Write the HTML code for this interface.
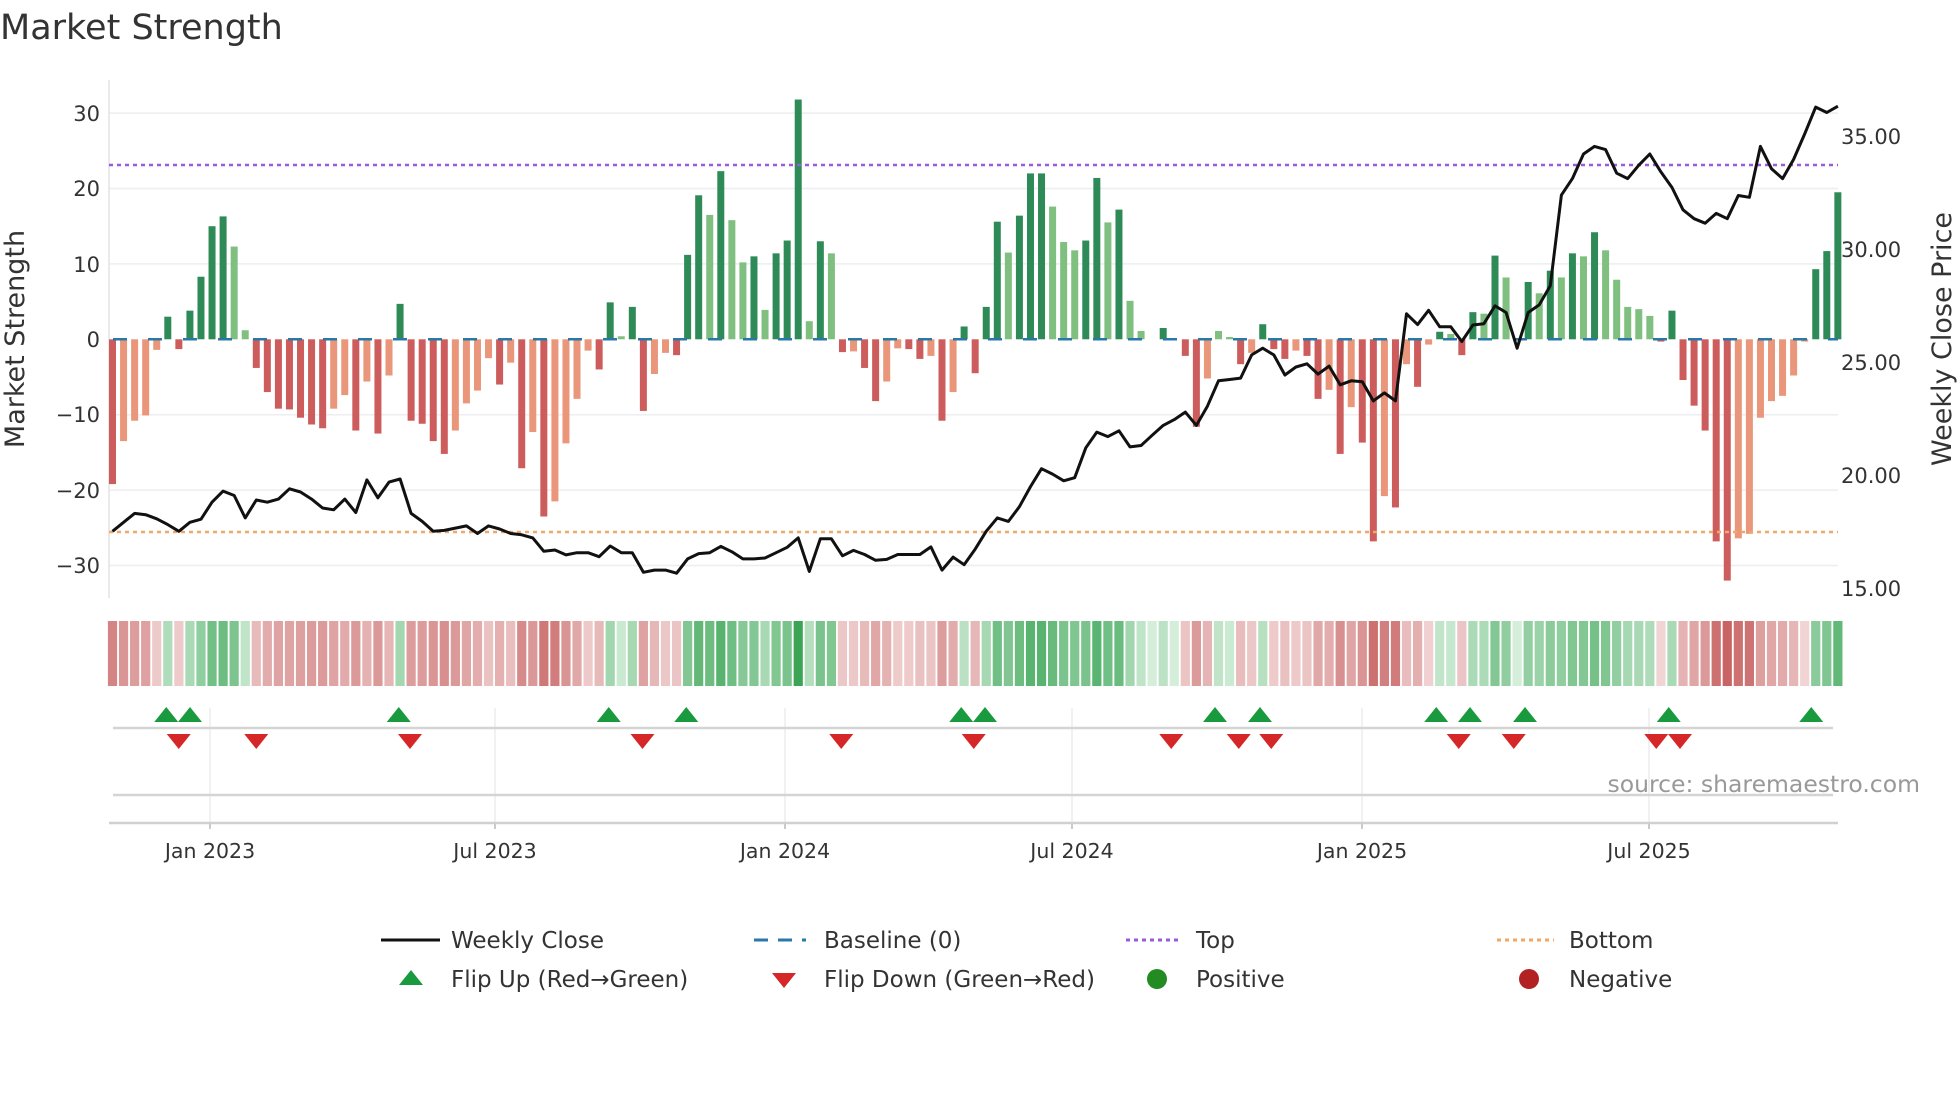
<!DOCTYPE html>
<html><head><meta charset="utf-8"><style>
html,body{margin:0;padding:0;background:#fff;}
body{width:1960px;height:1102px;overflow:hidden;font-family:"DejaVu Sans","Liberation Sans",sans-serif;}
svg text{font-family:"DejaVu Sans","Liberation Sans",sans-serif;}
</style></head><body>
<svg id="s" width="1960" height="1102" xmlns="http://www.w3.org/2000/svg">
<text x="0" y="39" font-size="35" fill="#333">Market Strength</text>
<g id="g"></g>
<text transform="translate(24,339) rotate(-90)" text-anchor="middle" font-size="27" fill="#333">Market Strength</text>
<text transform="translate(1951,339) rotate(-90)" text-anchor="middle" font-size="27" fill="#333">Weekly Close Price</text>
<g font-size="21" fill="#333" text-anchor="end">
<text x="100" y="121">30</text><text x="100" y="196">20</text><text x="100" y="272">10</text>
<text x="100" y="347">0</text><text x="100" y="422">−10</text><text x="100" y="498">−20</text><text x="100" y="573">−30</text>
</g>
<g font-size="21" fill="#333">
<text x="1841" y="144">35.00</text><text x="1841" y="257">30.00</text><text x="1841" y="370">25.00</text>
<text x="1841" y="483">20.00</text><text x="1841" y="596">15.00</text>
</g>
<g font-size="20.5" fill="#333" text-anchor="middle">
<text x="210" y="858">Jan 2023</text><text x="495" y="858">Jul 2023</text><text x="785" y="858">Jan 2024</text>
<text x="1072" y="858">Jul 2024</text><text x="1362" y="858">Jan 2025</text><text x="1649" y="858">Jul 2025</text>
</g>
<text x="1920" y="792" text-anchor="end" font-size="23.5" fill="#999">source: sharemaestro.com</text>
<g font-size="23" fill="#333">
<line x1="381" y1="940" x2="440" y2="940" stroke="#111" stroke-width="3"/>
<text x="451" y="948">Weekly Close</text>
<line x1="754" y1="940" x2="806" y2="940" stroke="#2a78a8" stroke-width="3" stroke-dasharray="14,10"/>
<text x="824" y="948">Baseline (0)</text>
<line x1="1126" y1="940" x2="1181" y2="940" stroke="#9b59e0" stroke-width="3" stroke-dasharray="4,4"/>
<text x="1196" y="948">Top</text>
<line x1="1497" y1="940" x2="1554" y2="940" stroke="#f0a868" stroke-width="3" stroke-dasharray="4,4"/>
<text x="1569" y="948">Bottom</text>
<polygon points="411,970 423,985 399,985" fill="#1a9a3e"/>
<text x="451" y="987">Flip Up (Red→Green)</text>
<polygon points="772,973 796,973 784,988" fill="#d62728"/>
<text x="824" y="987">Flip Down (Green→Red)</text>
<circle cx="1157" cy="979" r="10" fill="#228b22"/>
<text x="1196" y="987">Positive</text>
<circle cx="1529" cy="979" r="10" fill="#b22222"/>
<text x="1569" y="987">Negative</text>
</g>
</svg>
<script>
var V=[[-19.2,'r'],[-13.5,'s'],[-10.8,'s'],[-10.1,'s'],[-1.4,'s'],[3,'G'],[-1.3,'r'],[3.8,'G'],[8.3,'G'],[15,'G'],[16.3,'G'],[12.3,'g'],[1.2,'g'],[-3.8,'r'],[-7,'r'],[-9.2,'r'],[-9.3,'r'],[-10.4,'r'],[-11.3,'r'],[-11.8,'r'],[-9.2,'s'],[-7.4,'s'],[-12.1,'r'],[-5.6,'s'],[-12.5,'r'],[-4.8,'s'],[4.7,'G'],[-10.8,'r'],[-11.2,'r'],[-13.5,'r'],[-15.2,'r'],[-12.1,'s'],[-8.5,'s'],[-6.8,'s'],[-2.5,'s'],[-6,'r'],[-3.1,'s'],[-17.1,'r'],[-12.3,'s'],[-23.5,'r'],[-21.5,'s'],[-13.8,'s'],[-7.9,'s'],[-1.5,'s'],[-4,'r'],[4.9,'G'],[0.4,'g'],[4.3,'G'],[-9.5,'r'],[-4.6,'s'],[-1.8,'s'],[-2.1,'r'],[11.2,'G'],[19.1,'G'],[16.5,'g'],[22.3,'G'],[15.8,'g'],[10.2,'g'],[11,'G'],[3.9,'g'],[11.4,'G'],[13.1,'G'],[31.8,'G'],[2.4,'g'],[13,'G'],[11.4,'g'],[-1.7,'r'],[-1.6,'s'],[-3.8,'r'],[-8.2,'r'],[-5.6,'s'],[-1.2,'s'],[-1.3,'r'],[-2.6,'r'],[-2.2,'s'],[-10.8,'r'],[-7,'s'],[1.7,'G'],[-4.5,'r'],
[4.3,'G'],[15.6,'G'],[11.5,'g'],[16.4,'G'],[22,'G'],[22,'G'],[17.6,'g'],[12.9,'g'],[11.8,'g'],[13.1,'G'],[21.4,'G'],[15.5,'g'],[17.2,'G'],[5.1,'g'],[1.1,'g'],[0,'g'],[1.5,'G'],[0,'g'],[-2.2,'r'],[-11.6,'r'],[-5.2,'s'],[1.1,'g'],[0.3,'g'],[-3.3,'r'],[-1.8,'s'],[2,'G'],[-1.3,'r'],[-2.6,'r'],[-1.5,'s'],[-2.2,'r'],[-7.9,'r'],[-6.7,'s'],[-15.2,'r'],[-9,'s'],[-13.7,'r'],[-26.8,'r'],[-20.8,'s'],[-22.3,'r'],[-3.3,'s'],[-6.3,'r'],[-0.7,'s'],[1,'G'],[0.7,'g'],[-2.1,'r'],[3.6,'G'],[3.4,'g'],[11.1,'G'],[8.2,'g'],[0,'g'],[7.6,'G'],[6.1,'g'],[9.1,'G'],[8.2,'g'],[11.4,'G'],[11,'g'],[14.2,'G'],[11.8,'g'],[7.9,'g'],[4.3,'g'],[4,'g'],[3.1,'g'],[-0.3,'r'],[3.8,'G'],[-5.4,'r'],[-8.8,'r'],[-12.1,'r'],[-26.8,'r'],[-32,'r'],[-26.4,'s'],[-25.8,'s'],[-10.4,'s'],[-8.2,'s'],[-7.5,'s'],[-4.8,'s'],[-0.3,'s'],[9.3,'G'],[11.7,'G'],[19.5,'G']];
var C={G:'#2e8b57',g:'#7fbf7f',r:'#cd5c5c',s:'#e9967a'};
var X0=112.5,DX=11.06,Z=339.3,U=7.54;
var h='';
[30,20,10,-10,-20,-30].forEach(function(v){var y=Z-v*U;h+='<line x1="109" x2="1838" y1="'+y+'" y2="'+y+'" stroke="#eceef1" stroke-width="1.5"/>';});
h+='<line x1="109" x2="109" y1="80" y2="598" stroke="#e3e3e3" stroke-width="1.5"/>';
V.forEach(function(b,i){var x=X0+i*DX,v=b[0];if(v==0)return;var y=v>0?Z-v*U:Z,hh=Math.abs(v)*U;h+='<rect x="'+(x-3.5)+'" y="'+y+'" width="7" height="'+hh+'" fill="'+C[b[1]]+'"/>';});
h+='<line x1="109" x2="1838" y1="'+Z+'" y2="'+Z+'" stroke="#2a78a8" stroke-width="2.5" stroke-dasharray="14,21" stroke-dashoffset="-4"/>';
h+='<line x1="109" x2="1838" y1="165" y2="165" stroke="#9b59e0" stroke-width="2.5" stroke-dasharray="4,4"/>';
h+='<line x1="109" x2="1838" y1="532" y2="532" stroke="#f0a868" stroke-width="2.5" stroke-dasharray="4,4"/>';
var L=[1190,1170,1150,1153,1162,1175,1190,1170,1163,1125,1100,1110,1160,1120,1125,1118,1095,1102,1118,1138,1142,1118,1148,1075,1115,1080,1073,1150,1168,1190,1188,1183,1178,1195,1178,1185,1195,1198,1205,1235,1232,1243,1238,1238,1247,1223,1238,1238,1282,1277,1277,1284,1252,1240,1238,1224,1236,1252,1252,1250,1238,1226,1205,1280,1207,1207,1245,1233,1242,1255,1253,1242,1242,1242,1225,1277,1248,1265,1230,
1190,1160,1168,1135,1090,1050,1062,1077,1070,1003,968,978,965,1001,998,975,953,940,923,953,910,853,850,847,795,780,795,840,822,815,838,820,862,853,855,898,880,898,703,727,695,732,732,765,728,725,685,700,780,700,683,640,437,400,345,328,335,388,400,370,345,385,420,470,490,500,478,490,438,442,328,378,400,357,300,240,252,238];
var p=L.map(function(y,i){return (X0+i*DX).toFixed(1)+','+(y/2.24).toFixed(1);}).join(' ');
h+='<polyline points="'+p+'" fill="none" stroke="#111" stroke-width="3" stroke-linejoin="round"/>';
function mix(a,b,t){return 'rgb('+a.map(function(c,k){return Math.round(c+(b[k]-c)*t);}).join(',')+')';}
V.forEach(function(b,i){var v=b[0],x=X0+i*DX,col;
 if(v>=0){var t=Math.min(Math.pow(v/32,0.6),1);col=mix([212,238,218],[58,165,85],t);}
 else{var t=Math.min(Math.pow(-v/32,0.6),1);col=mix([244,220,220],[200,100,100],t);}
 h+='<rect x="'+(x-4.6)+'" y="621" width="9.2" height="65" fill="'+col+'"/>';});
[210,495,785,1072,1362,1649].forEach(function(x){h+='<line x1="'+x+'" x2="'+x+'" y1="708" y2="828" stroke="#ececec" stroke-width="1.5"/><line x1="'+x+'" x2="'+x+'" y1="822" y2="829" stroke="#bbb" stroke-width="1.5"/>';});
h+='<line x1="113" x2="1833" y1="728" y2="728" stroke="#d4d4d4" stroke-width="2.5"/>';
h+='<line x1="113" x2="1833" y1="795" y2="795" stroke="#d4d4d4" stroke-width="2.5"/>';
h+='<line x1="109" x2="1838" y1="823" y2="823" stroke="#d0d0d0" stroke-width="2.5"/>';
[133,152,319,487,549,769,788,972,1008,1149,1176,1220,1335,1449].forEach(function(d){var x=d*1.25;h+='<polygon points="'+x+',707 '+(x+12)+',722 '+(x-12)+',722" fill="#1a9a3e"/>';});
[143,205,328,514,673,779,937,991,1017,1167,1211,1325,1344].forEach(function(d){var x=d*1.25;h+='<polygon points="'+(x-12)+',734 '+(x+12)+',734 '+x+',749" fill="#d62728"/>';});
document.getElementById('g').innerHTML=h;
</script>
</body></html>
